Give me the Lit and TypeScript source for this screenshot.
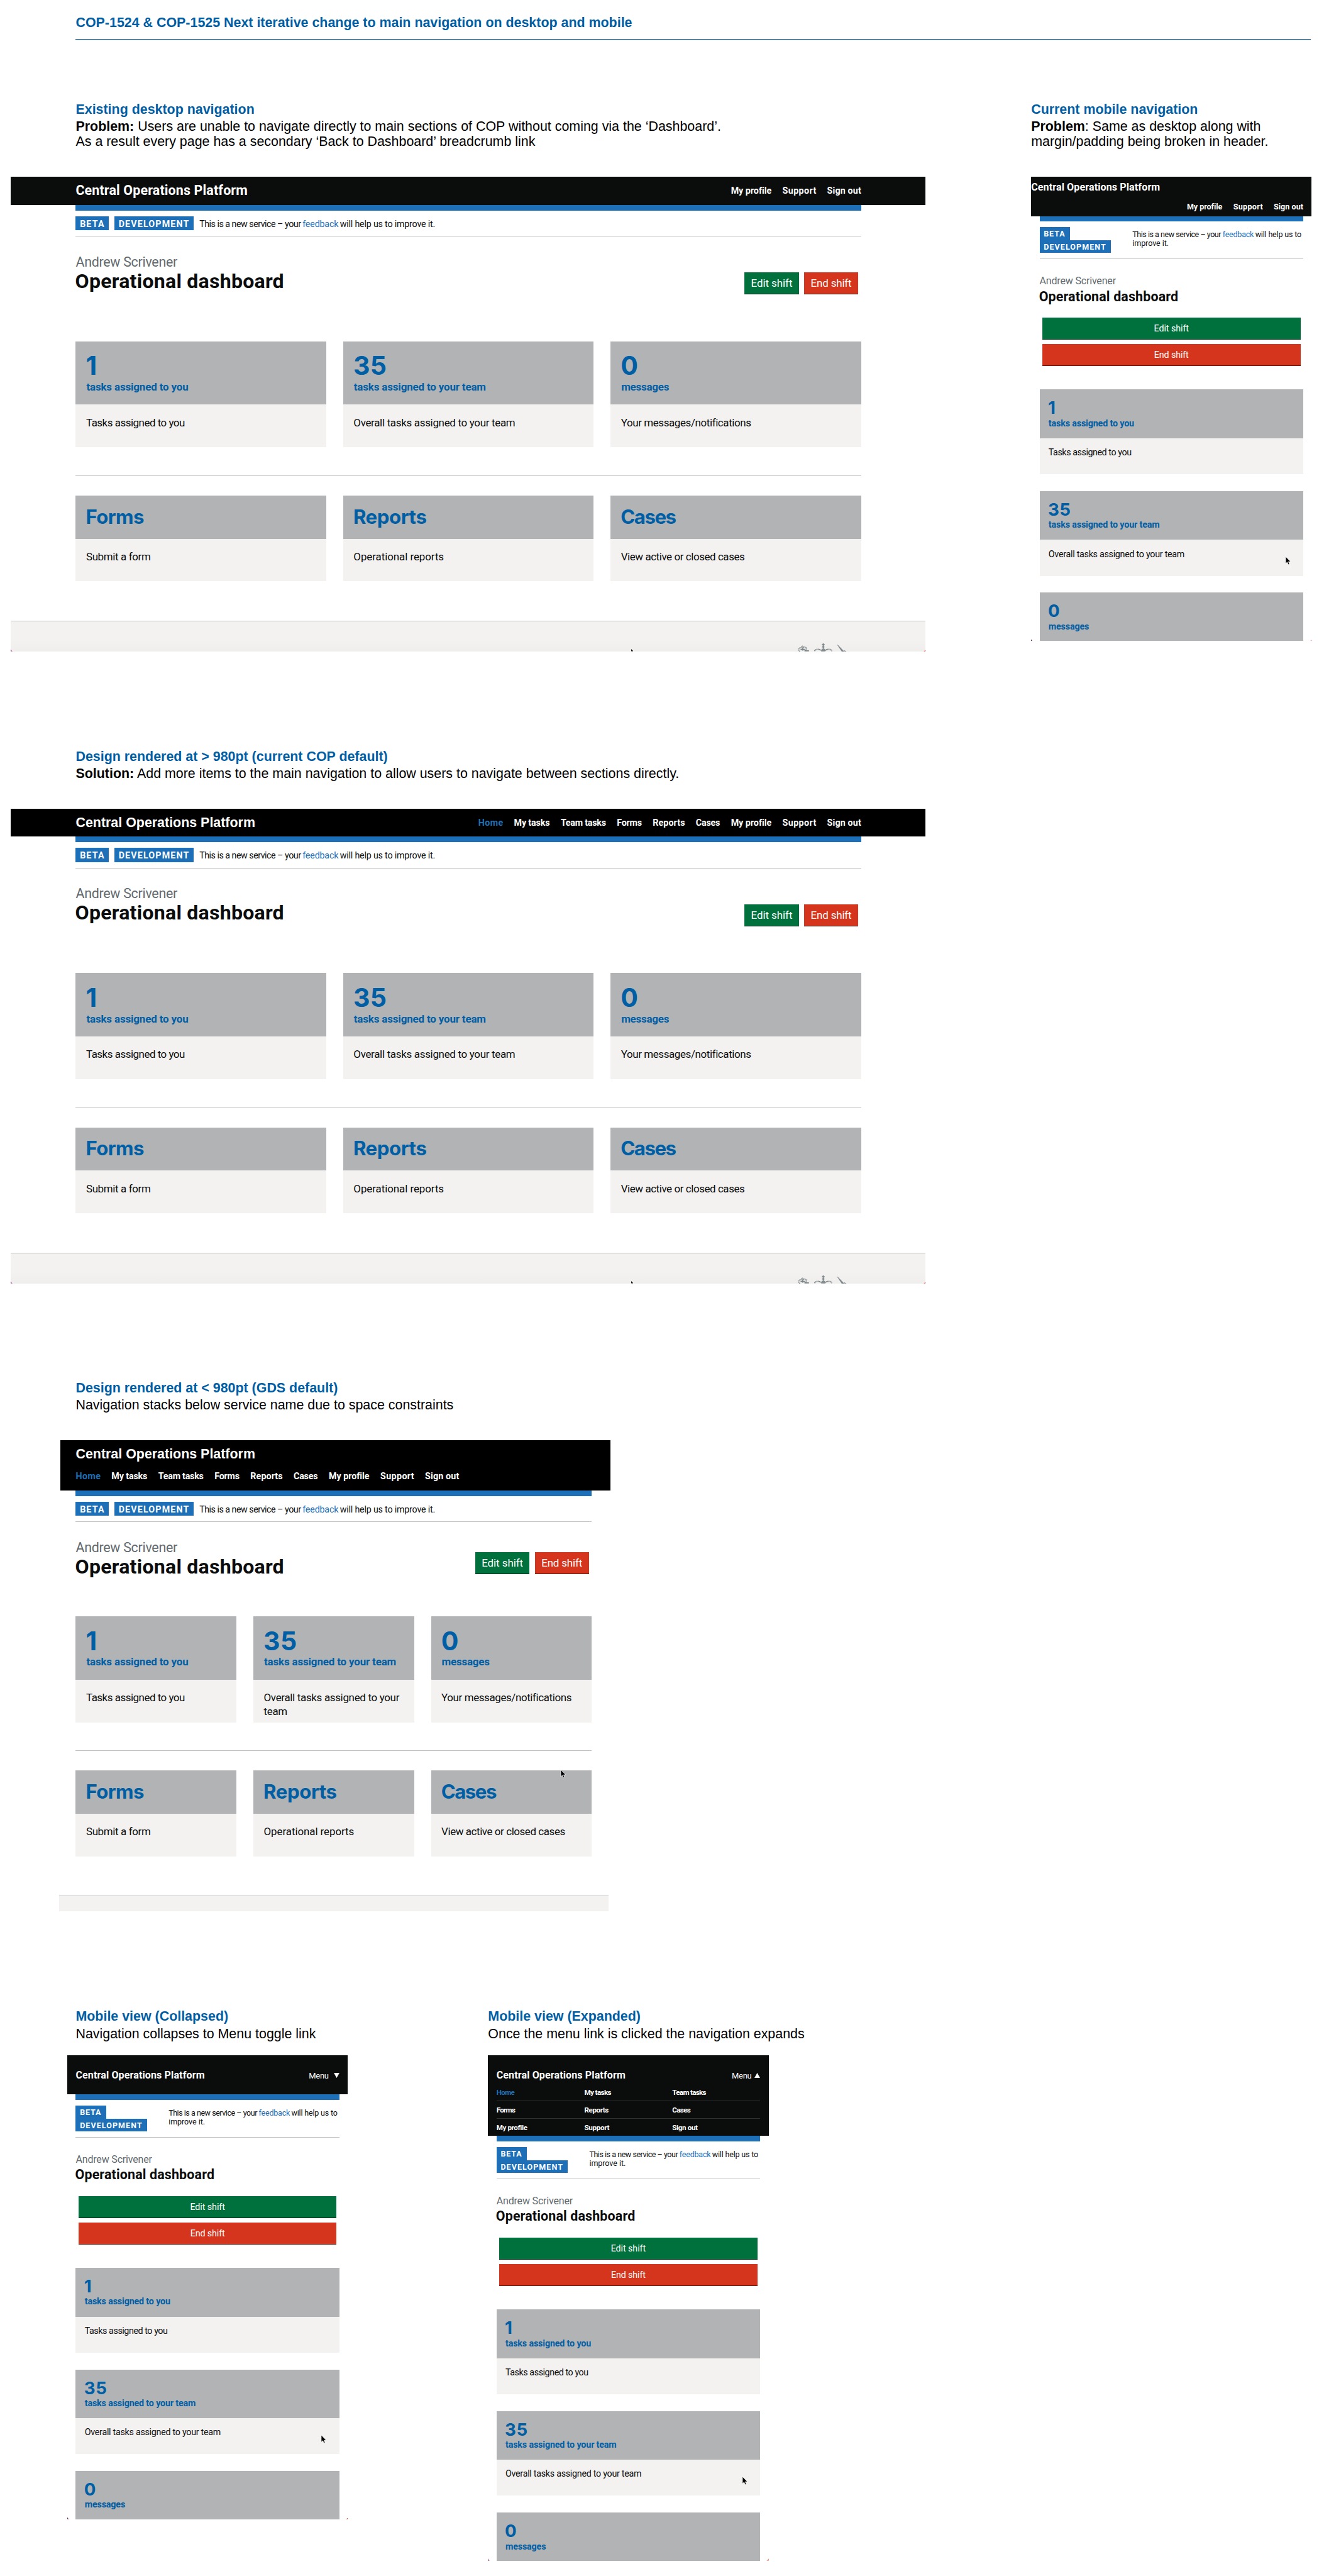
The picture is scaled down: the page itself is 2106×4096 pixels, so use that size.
import { LitElement, html, css, svg, nothing } from "lit";
import { customElement, property } from "lit/decorators.js";

type Run = [text: string, width: number];
type Variant = "desktop" | "tablet" | "mobile";
type Header = "existing" | "wide" | "stacked" | "broken" | "collapsed" | "expanded";

const ctx = document.createElement("canvas").getContext("2d")!;

/** A single line of text tracked so that its ink spans `w` pixels. */
@customElement("fit-text")
export class FitText extends LitElement {
  static styles = css`
    :host { display: inline-block; white-space: pre; transform: translateY(calc(0.045em + 0.5px)); }
  `;
  @property() text = "";
  @property({ type: Number }) w = 0;

  render() {
    return html`${this.text}`;
  }

  updated() {
    if (!this.w || this.text.length < 2) return;
    const cs = getComputedStyle(this);
    const size = parseFloat(cs.fontSize);
    ctx.font = `${cs.fontWeight} 100px ${cs.fontFamily}`;
    const m = ctx.measureText(this.text);
    const ink = (m.actualBoundingBoxRight + m.actualBoundingBoxLeft) / 100;
    const ls = (this.w / size - ink) / (this.text.length - 1);
    this.style.letterSpacing = `${ls.toFixed(4)}em`;
    this.style.marginRight = `${(-ls).toFixed(4)}em`;
  }
}

const fit = ([text, w]: Run) => html`<fit-text .text=${text} .w=${w}></fit-text>`;

const fullNav: Run[] = [
  ["Home", 43], ["My tasks", 62.5], ["Team tasks", 80], ["Forms", 43], ["Reports", 56],
  ["Cases", 42], ["My profile", 71], ["Support", 59.5], ["Sign out", 60],
];
const gridNav: Run[] = [
  ["Home", 31.6], ["My tasks", 47], ["Team tasks", 60], ["Forms", 32.6], ["Reports", 42.3],
  ["Cases", 32], ["My profile", 54], ["Support", 44], ["Sign out", 45],
];

interface Card { head: Run; sub?: Run; desc: Run[]; }

const wideTasks = (split: boolean): Card[] => [
  { head: ["1", 0], sub: ["tasks assigned to you", 181], desc: [["Tasks assigned to you", 175]] },
  {
    head: ["35", 56], sub: ["tasks assigned to your team", 235],
    desc: split
      ? [["Overall tasks assigned to your", 241], ["team", 41]]
      : [["Overall tasks assigned to your team", 286.5]],
  },
  { head: ["0", 0], sub: ["messages", 84], desc: [["Your messages/notifications", 231]] },
];
const sections: Card[] = [
  { head: ["Forms", 101], desc: [["Submit a form", 113.5]] },
  { head: ["Reports", 128], desc: [["Operational reports", 159.5]] },
  { head: ["Cases", 97], desc: [["View active or closed cases", 220]] },
];
const mobileTasks: Card[] = [
  { head: ["1", 0], sub: ["tasks assigned to you", 152], desc: [["Tasks assigned to you", 147]] },
  { head: ["35", 38], sub: ["tasks assigned to your team", 197.5], desc: [["Overall tasks assigned to your team", 241]] },
  { head: ["0", 0], sub: ["messages", 71], desc: [] },
];

const pointer = svg`
  <path d="M1 1 L1 12.4 L3.6 10 L5.3 14 L7.2 13.2 L5.5 9.3 L9 9.1 Z"
    fill="#000" stroke="#fff" stroke-width="0.7" stroke-linejoin="round"/>`;

@customElement("cop-mock")
export class CopMock extends LitElement {
  @property({ reflect: true }) variant: Variant = "desktop";
  @property({ reflect: true }) header: Header = "existing";

  static styles = css`
    :host {
      display: block; position: relative; overflow: hidden; color: #0b0c0c;
      font-family: Roboto, "Noto Sans", sans-serif; white-space: nowrap;
    }
    :host([variant="desktop"]) { width: 1631px; height: 846px; --side: 116px; }
    :host([variant="tablet"]) { width: 983px; height: 840px; --side: 30px; }
    :host([variant="mobile"]) { width: 500px; height: 827px; --side: 15px; }
    :host([header="expanded"]) { height: 901px; }

    .bar { background: #0b0c0c; color: #fff; font-weight: 700; box-sizing: border-box; }
    .bar.existing, .bar.wide { height: 50px; padding: 0 115px 0 116px; display: flex; justify-content: space-between; }
    .bar.wide, .bar.stacked { background: #000; }
    .title { font-size: 24px; line-height: 47px; }
    .wide .title, .stacked .title { font-family: "Liberation Sans", Arial, sans-serif; line-height: 50px; }
    .stacked .title { height: 49px; }
    .nav { display: flex; gap: 19.4px; font-size: 16px; line-height: 48px; }
    .home { color: #1d70b8; }
    .bar.stacked { height: 90px; width: 980px; margin-left: 3px; padding-left: 27px; }
    .stacked .nav { line-height: 31px; gap: 19.5px; }
    .bar.broken { height: 70px; padding-right: 15px; }
    .broken .title { font-size: 18px; line-height: 36.6px; }
    .broken .nav { font-size: 14px; line-height: 31.4px; justify-content: flex-end; }
    .bar.collapsed { height: 70px; }
    .bar.expanded { height: 144px; }
    .top { display: flex; justify-content: space-between; padding: 0 15px; height: 70px; }
    .expanded .top { height: 51px; }
    .top .title { font-size: 18px; line-height: 70px; }
    .menu { display: flex; font-weight: 400; font-size: 14.5px; line-height: 71px; }
    .tri { width: 10px; height: 9px; margin: 32px 0 0 9px; fill: #fff; }
    .expanded .tri { margin-left: 5px; }
    .grid { display: grid; grid-template-columns: repeat(3, 1fr); margin: 0 15px; font-size: 13px; }
    .cell { height: 30px; line-height: 30px; border-bottom: 1px solid #2d3132; }
    .cell:nth-child(n + 7) { border-bottom: none; }

    .body { margin: 0 var(--side); }
    :host([variant="desktop"]) .body { margin-right: 115px; }
    :host([variant="tablet"]) .body { margin-right: 33px; }
    .blue { height: 10px; background: #1d70b8; }
    .phase { display: flex; padding: 10px 0; border-bottom: 1px solid #bfc1c3; font-size: 16px; line-height: 25px; height: 25px; }
    .tags { display: flex; gap: 10px; margin-right: 10.5px; }
    .tag { background: #1d70b8; color: #fff; font-weight: 700; padding: 0 7.5px; box-sizing: border-box; width: 59px; }
    .tag.dev { width: 141px; }
    .msg { display: flex; gap: 2.5px; }
    .link { color: #1d70b8; }

    .head { display: flex; justify-content: space-between; padding-top: 30px; height: 157px; }
    :host([variant="tablet"]) .head { height: 138px; }
    .name { color: #626a6e; font-size: 24px; line-height: 28px; }
    .h1 { font-size: 36px; line-height: 40px; font-weight: 700; margin-left: -1px; }
    .btns { display: flex; gap: 9.5px; padding: 34px 5.5px 0 0; }
    :host([variant="tablet"]) .btns { padding-top: 24px; }
    .btn { width: 97px; height: 38px; border-bottom: 2px solid #002d18; background: #00703c; color: #fff; font-size: 19px; line-height: 38px; text-align: center; }
    .btn.end { background: #d4351c; border-color: #55150b; width: 96px; }

    .cards { display: grid; grid-template-columns: repeat(3, 1fr); gap: 30px; }
    .box { height: 113px; background: #b1b3b5; color: #005ea5; font-weight: 700; box-sizing: border-box; padding: 16.4px 0 0 19px; }
    .box.short { height: 77px; }
    .num { font-family: Inter, Roboto, sans-serif; font-size: 46px; line-height: 50px; margin-left: -1px; }
    .short .num { font-size: 35px; line-height: 40px; margin-left: -1px; }
    .sub { font-size: 19px; line-height: 24px; margin-top: 2.2px; }
    .desc { height: 76px; background: #f3f2f1; box-sizing: border-box; padding: 18px 0 0 18.5px; font-size: 19px; line-height: 25px; }
    .rule { height: 1px; background: #bfc1c3; margin: 50px 0 35px; }
    .foot { margin-top: 70px; border-top: 1px solid #bfc1c3; background: linear-gradient(#f3f2f1 60%, #efeeec); height: 54px; }
    :host([variant="tablet"]) .foot { width: 980px; height: 27px; background: #f3f2f1; }

    :host([variant="mobile"]) .phase { height: 46px; font-size: 14px; line-height: 23px; }
    :host([variant="mobile"]) .tags { display: block; width: 165.5px; margin: 0; }
    :host([variant="mobile"]) .tag { width: 54px; }
    :host([variant="mobile"]) .tag.dev { width: 127px; }
    .lines { line-height: 16px; padding-top: 4px; }
    :host([variant="mobile"]) .head { display: block; padding-top: 28px; height: 204px; }
    :host([variant="mobile"]) .name { font-size: 18px; line-height: 20px; }
    :host([variant="mobile"]) .h1 { font-size: 24px; line-height: 30px; margin-top: 2.7px; }
    :host([variant="mobile"]) .btns { flex-direction: column; gap: 8px; padding: 23.3px 5px 0; }
    :host([variant="mobile"]) .btn { width: auto; font-size: 16px; }
    :host([variant="mobile"]) .cards { grid-template-columns: 1fr; }
    :host([variant="mobile"]) .box { height: 87px; padding: 14.6px 0 0 16px; }
    :host([variant="mobile"]) .num { font-size: 31px; line-height: 32px; }
    :host([variant="mobile"]) .sub { font-size: 16px; line-height: 20px; margin-top: 3.2px; }
    :host([variant="mobile"]) .desc { height: 64px; padding: 14.8px 0 0 16px; font-size: 16px; line-height: 20px; }

    .over { position: absolute; }
    .emblem { left: 1402px; bottom: 0; width: 90px; height: 16px; }
    .cursor { width: 11px; height: 17.6px; }
    :host([variant="mobile"]) .cursor { right: 37px; bottom: 134px; }
    :host([variant="tablet"]) .cursor { left: 894px; top: 586px; }
    .tip { left: 1106px; bottom: 0; width: 4px; height: 4px; }
    .cl { left: 0; bottom: 0; width: 4px; height: 4px; }
    .cr { right: 0; bottom: 0; width: 4px; height: 4px; }
  `;

  private navItems(items: Run[]) {
    return html`<nav class="nav">
      ${items.map((r) => html`<span class=${r[0] === "Home" ? "home" : "item"}>${fit(r)}</span>`)}
    </nav>`;
  }

  private renderBar() {
    const small = html`<div class="title">${fit(["Central Operations Platform", 228.5])}</div>`;
    const arial = html`<div class="title">Central Operations Platform</div>`;
    switch (this.header) {
      case "existing":
        return html`<div class="title">${fit(["Central Operations Platform", 304.5])}</div>
          ${this.navItems(fullNav.slice(6))}`;
      case "wide":
      case "stacked":
        return html`${arial}${this.navItems(fullNav)}`;
      case "broken":
        return html`${small}${this.navItems([["My profile", 62], ["Support", 52], ["Sign out", 52]])}`;
      default: {
        const open = this.header === "expanded";
        return html`<div class="top">${small}
            <div class="menu">${fit(["Menu", 33.5])}
              <svg class="tri" viewBox="0 0 10 9"><path d=${open ? "M5 0L10 9H0Z" : "M0 0H10L5 9Z"}></path></svg>
            </div>
          </div>
          ${open
            ? html`<nav class="grid">${gridNav.map((r) => html`<div class="cell ${r[0] === "Home" ? "home" : ""}">${fit(r)}</div>`)}</nav>`
            : nothing}`;
      }
    }
  }

  private renderCards(cards: Card[]) {
    return html`<div class="cards">${cards.map((c) => html`<div class="card">
      <div class="box ${c.sub ? "" : "short"}">
        <div class="num">${fit(c.head)}</div>
        ${c.sub ? html`<div class="sub">${fit(c.sub)}</div>` : nothing}
      </div>
      ${c.desc.length ? html`<div class="desc">${c.desc.map((d) => html`<div>${fit(d)}</div>`)}</div>` : nothing}
    </div>`)}</div>`;
  }

  render() {
    const m = this.variant === "mobile";
    return html`
      <div class="bar ${this.header}">${this.renderBar()}</div>
      <div class="body">
        <div class="blue"></div>
        <div class="phase">
          <div class="tags">
            <div class="tag">${fit(["BETA", m ? 36.5 : 42])}</div>
            <div class="tag dev">${fit(["DEVELOPMENT", m ? 109.5 : 124])}</div>
          </div>
          ${m
            ? html`<div class="lines">
                <div class="msg">${fit(["This is a new service – your", 158])}<span class="link">${fit(["feedback", 55.5])}</span>${fit(["will help us to", 81.5])}</div>
                <div>${fit(["improve it.", 63])}</div>
              </div>`
            : html`<div class="msg">${fit(["This is a new service – your", 181])}<span class="link">${fit(["feedback", 64])}</span>${fit(["will help us to improve it.", 168.5])}</div>`}
        </div>
        <div class="head">
          <div class="who">
            <div class="name">${fit(["Andrew Scrivener", m ? 136 : 181])}</div>
            <div class="h1">${fit(["Operational dashboard", m ? 246 : 369])}</div>
          </div>
          <div class="btns">
            <div class="btn">${fit(["Edit shift", m ? 60.5 : 72])}</div>
            <div class="btn end">${fit(["End shift", m ? 60 : 71])}</div>
          </div>
        </div>
        ${m ? this.renderCards(mobileTasks) : html`
          ${this.renderCards(wideTasks(this.variant === "tablet"))}
          <div class="rule"></div>
          ${this.renderCards(sections)}`}
      </div>
      ${m ? nothing : html`<div class="foot"></div>`}
      ${this.variant === "desktop" ? html`
        <svg class="over emblem" viewBox="0 0 90 16" fill="none" stroke="#7b8588">
          <path d="M5 16C1 13 3 8 7 9C8 5 10 5 11 8C15 6 18 10 15 14" stroke-width="1.8" stroke-dasharray="1.8 .6"></path>
          <path d="M6 12H14M10 8V14M13 14.5H21" stroke-width="2"></path>
          <path d="M31 15C33 10 41 11 43.500 14.500M49.500 14.500C52 11 60 10 62 15" stroke-width="2" stroke-dasharray="1.8 .5"></path>
          <path d="M46.500 1V7M44 3.500H49M44.500 7.500H48.500M46.500 8V12M43.500 12H49.500M43 14.500H50" stroke-width="1.9"></path>
          <path d="M71.500 3.500L74 5.500L84 16H80Z" fill="#7b8588" stroke-width="0.6"></path>
          <path d="M84 14L87 16" stroke-width="1.600"></path>
        </svg>
        <svg class="over tip" viewBox="0 0 4 4"><path d="M0 0L4 4H0Z" fill="#111"></path></svg>` : html`
        <svg class="over cursor" viewBox="0 0 10 16">${pointer}</svg>`}
      ${this.variant === "tablet" ? nothing : html`
        <svg class="over cl" viewBox="0 0 4 4"><path d="M0 0C.5 2.500 2 3.500 4 4H0Z" fill="#7b1a63"></path></svg>
        <svg class="over cr" viewBox="0 0 4 4"><path d="M4 0C3.500 2.500 2 3.500 0 4H4Z" fill=${m ? "#d4350c" : "#c00d0d"}></path></svg>`}
    `;
  }
}

@customElement("app-root")
export class AppRoot extends LitElement {
  static styles = css`
    :host { display: block; background: #fff; }
    .page {
      zoom: 0.892373; width: 2360px; height: 4590px; overflow: hidden; color: #000;
      font: 24px/27px "Liberation Sans", Arial, sans-serif; white-space: nowrap;
    }
    .pagehead {
      margin: 0 23px 0 135px; height: 71px; border-bottom: 2px solid #005ea5; box-sizing: border-box;
      padding-top: 26.3px; line-height: 30px; font-weight: 700; color: #005ea5;
    }
    .row { display: flex; align-items: flex-start; margin-bottom: 171.7px; }
    .r1 { padding: 108.7px 0 0 19px; gap: 188px; --cap: 135.3px; }
    .r2 { padding-left: 19px; --cap: 108.3px; margin-bottom: 170.7px; }
    .r3 { padding-left: 105px; --cap: 108.3px; }
    .r4 { padding-left: 120px; gap: 250px; --cap: 84.3px; margin: 0; }
    .cap { height: var(--cap); box-sizing: border-box; padding-top: 1px; }
    .cap.in-desktop { margin-left: 116px; }
    .cap.in-tablet { margin-left: 30px; }
    .cap.in-mobile { margin-left: 15px; }
    .cap.flush { width: 500px; }
    h2 { margin: 0 0 1.5px; font-size: 24px; line-height: 30px; color: #005ea5; }
    p { margin: 0; }
  `;

  render() {
    return html`<main class="page">
      <header class="pagehead">COP-1524 &amp; COP-1525 Next iterative change to main navigation on desktop and mobile</header>
      <section class="row r1">
        <div>
          <div class="cap in-desktop">
            <h2>Existing desktop navigation</h2>
            <p><b>Problem:</b> Users are unable to navigate directly to main sections of COP without coming via the ‘Dashboard’.<br />As a result every page has a secondary ‘Back to Dashboard’ breadcrumb link</p>
          </div>
          <cop-mock variant="desktop" header="existing"></cop-mock>
        </div>
        <div>
          <div class="cap flush">
            <h2>Current mobile navigation</h2>
            <p><b>Problem</b>: Same as desktop along with<br />margin/padding being broken in header.</p>
          </div>
          <cop-mock variant="mobile" header="broken"></cop-mock>
        </div>
      </section>
      <section class="row r2">
        <div>
          <div class="cap in-desktop">
            <h2>Design rendered at &gt; 980pt (current COP default)</h2>
            <p><b>Solution:</b> Add more items to the main navigation to allow users to navigate between sections directly.</p>
          </div>
          <cop-mock variant="desktop" header="wide"></cop-mock>
        </div>
      </section>
      <section class="row r3">
        <div>
          <div class="cap in-tablet">
            <h2>Design rendered at &lt; 980pt (GDS default)</h2>
            <p>Navigation stacks below service name due to space constraints</p>
          </div>
          <cop-mock variant="tablet" header="stacked"></cop-mock>
        </div>
      </section>
      <section class="row r4">
        <div>
          <div class="cap in-mobile">
            <h2>Mobile view (Collapsed)</h2>
            <p>Navigation collapses to Menu toggle link</p>
          </div>
          <cop-mock variant="mobile" header="collapsed"></cop-mock>
        </div>
        <div>
          <div class="cap flush">
            <h2>Mobile view (Expanded)</h2>
            <p>Once the menu link is clicked the navigation expands</p>
          </div>
          <cop-mock variant="mobile" header="expanded"></cop-mock>
        </div>
      </section>
    </main>`;
  }
}
